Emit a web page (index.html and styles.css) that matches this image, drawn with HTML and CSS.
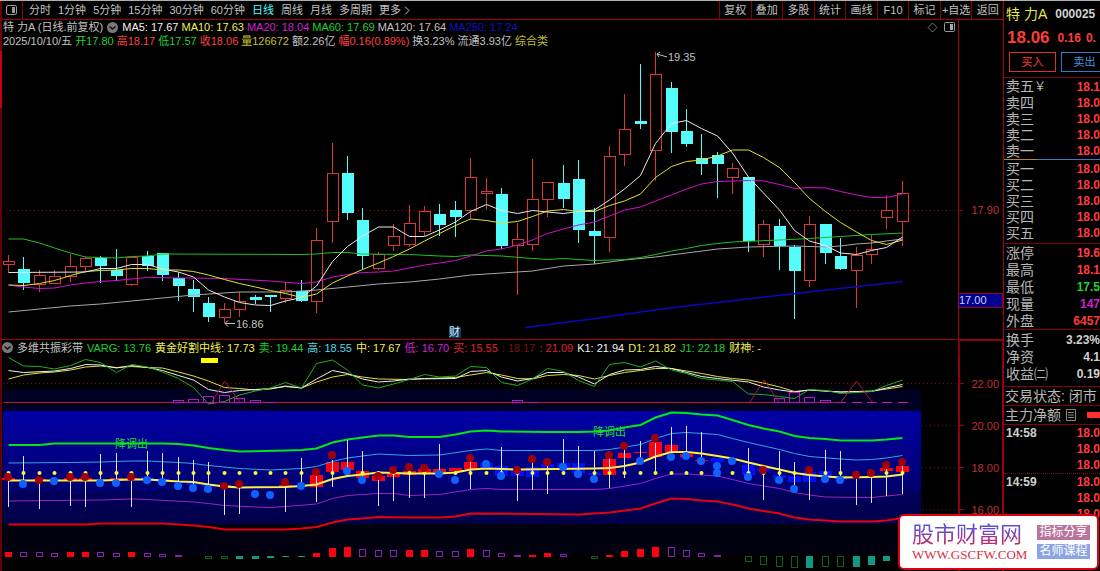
FILE: index.html
```html
<!DOCTYPE html>
<html lang="zh-CN">
    <head>
        <meta charset="utf-8">
        <title>特力A 000025 日线</title>
        <link rel="stylesheet" href="styles.css">
    </head>
    <body>
        <div class="app">
            <div class="workspace">
                <header class="toolbar">
                    <button class="icon-button" aria-label="侧栏">
                        <svg width="12" height="11" viewBox="0 0 12 11">
                            <rect x="0.5" y="0.5" width="10" height="9" rx="1.5" fill="none" stroke="#999"/>
                            <rect x="6" y="2" width="3" height="6" fill="#999"/>
                        </svg>
                    </button>
                    <nav class="periods">
                        <a href="#">分时</a>
                        <a href="#">1分钟</a>
                        <a href="#">5分钟</a>
                        <a href="#">15分钟</a>
                        <a href="#">30分钟</a>
                        <a href="#">60分钟</a>
                        <a href="#" class="active">日线</a>
                        <a href="#">周线</a>
                        <a href="#">月线</a>
                        <a href="#">多周期</a>
                        <a href="#" class="more">更多
                            <svg width="6" height="9" viewBox="0 0 6 9"><path d="M1 0.5L5 4.5L1 8.5" fill="none" stroke="#c0c0c0"/></svg>
                        </a>
                    </nav>
                    <div class="actions">
                        <button>复权</button>
                        <button>叠加</button>
                        <button>多股</button>
                        <button>统计</button>
                        <button>画线</button>
                        <button>F10</button>
                        <button>标记</button>
                        <button>+自选</button>
                        <button>返回</button>
                    </div>
                </header>

                <section class="panel">
                    <div class="panel-head">
                        <div class="legends">
                            <div class="legend">
                                <span class="silver">特 力A (日线.前复权)</span>
                                <svg class="chevron" width="11" height="11" viewBox="0 0 11 11">
                                    <circle cx="5.5" cy="5.5" r="5.5" fill="#777"/>
                                    <path d="M2.5 4.5L5.5 7L8.5 4.5" fill="none" stroke="#111" stroke-width="1.5"/>
                                </svg>
                                <span class="white">MA5: 17.67</span>
                                <span class="yellow">MA10: 17.63</span>
                                <span class="magenta">MA20: 18.04</span>
                                <span class="green">MA60: 17.69</span>
                                <span class="silver">MA120: 17.64</span>
                                <span class="blue">MA250: 17.24</span>
                                <span class="head-tools">
                                    <svg width="11" height="11" viewBox="0 0 11 11"><path d="M5.5 1L10 5.5L5.5 10L1 5.5Z" fill="none" stroke="#777"/></svg>
                                    <svg width="12" height="11" viewBox="0 0 12 11">
                                        <rect x="0.5" y="0.5" width="10" height="9" rx="1" fill="none" stroke="#999"/>
                                        <rect x="6" y="2" width="3" height="6" fill="#aaa"/>
                                    </svg>
                                </span>
                            </div>
                            <div class="legend">
                                <span class="silver">2025/10/10/五</span>
                                <span class="green">开17.80</span>
                                <span class="red">高18.17</span>
                                <span class="green">低17.57</span>
                                <span class="red">收18.06</span>
                                <span class="olive">量126672</span>
                                <span class="silver">额2.26亿</span>
                                <span class="red">幅0.16(0.89%)</span>
                                <span class="silver">换3.23%</span>
                                <span class="silver">流通3.93亿</span>
                                <span class="olive">综合类</span>
                            </div>
                        </div>
                        <div class="axis-head"></div>
                    </div>
                    <svg class="chart" id="kline" viewBox="2 48 1001 291"></svg>
                </section>

                <section class="panel">
                    <div class="panel-head">
                        <div class="legend legend-sub">
                            <svg class="chevron" width="11" height="11" viewBox="0 0 11 11">
                                <circle cx="5.5" cy="5.5" r="5.5" fill="#777"/>
                                <path d="M2.5 4.5L5.5 7L8.5 4.5" fill="none" stroke="#111" stroke-width="1.5"/>
                            </svg>
                            <span class="silver">多维共振彩带</span>
                            <span class="green">VARG: 13.76</span>
                            <span class="yellow">黄金好割中线: 17.73</span>
                            <span class="green">卖: 19.44</span>
                            <span class="cyan">高: 18.55</span>
                            <span class="yellow">中: 17.67</span>
                            <span class="magenta">低: 16.70</span>
                            <span class="crimson">买: 15.55</span>
                            <span class="maroon">: 18.17</span>
                            <span class="crimson">: 21.09</span>
                            <span class="white">K1: 21.94</span>
                            <span class="yellow">D1: 21.82</span>
                            <span class="green">J1: 22.18</span>
                            <span class="yellow">财神: -</span>
                        </div>
                        <div class="axis-head axis-head-sub"></div>
                    </div>
                    <svg class="chart" id="bands" viewBox="2 355 1001 216"></svg>
                </section>
            </div>

            <aside class="quote">
                <h1 class="stock"><span>特 力A</span> <b>000025</b></h1>
                <div class="price"><strong>18.06</strong> <b>0.16</b> <b>0.</b></div>
                <div class="trade">
                    <button class="buy">买入</button>
                    <button class="sell">卖出</button>
                </div>
                <table class="asks">
                    <tr><th>卖五<small>￥</small></th><td>18.1</td></tr>
                    <tr><th>卖四</th><td>18.0</td></tr>
                    <tr><th>卖三</th><td>18.0</td></tr>
                    <tr><th>卖二</th><td>18.0</td></tr>
                    <tr><th>卖一</th><td>18.0</td></tr>
                </table>
                <table class="bids">
                    <tr><th>买一</th><td>18.0</td></tr>
                    <tr><th>买二</th><td>18.0</td></tr>
                    <tr><th>买三</th><td>18.0</td></tr>
                    <tr><th>买四</th><td>18.0</td></tr>
                    <tr><th>买五</th><td>18.0</td></tr>
                </table>
                <table class="stats">
                    <tr><th>涨停</th><td>19.6</td></tr>
                    <tr><th>最高</th><td>18.1</td></tr>
                    <tr><th>最低</th><td class="green">17.5</td></tr>
                    <tr><th>现量</th><td class="magenta">147</td></tr>
                    <tr><th>外盘</th><td>6457</td></tr>
                </table>
                <table class="stats plain">
                    <tr><th>换手</th><td>3.23%</td></tr>
                    <tr><th>净资</th><td>4.1</td></tr>
                    <tr><th>收益㈡</th><td>0.19</td></tr>
                </table>
                <div class="status">交易状态: 闭市</div>
                <div class="status flow">主力净额
                    <svg width="12" height="12" viewBox="0 0 12 12"><path d="M1.5 0.5H10.5V11.5H1.5ZM3 3.5H9M3 6H9M3 8.5H9" fill="none" stroke="#888"/></svg>
                    <i></i>
                </div>
                <table class="ticks">
                    <tr><th>14:58</th><td>18.0</td></tr>
                    <tr><th></th><td>18.0</td></tr>
                    <tr><th></th><td>18.0</td></tr>
                    <tr class="minute"><th>14:59</th><td>18.0</td></tr>
                    <tr><th></th><td>18.0</td></tr>
                    <tr><th></th><td>18.0</td></tr>
                </table>
            </aside>

            <a class="brand" href="#">
                <span class="brand-name">
                    <strong>股市财富网</strong>
                    <em>WWW.GSCFW.COM</em>
                </span>
                <span class="brand-tags">
                    <span>指标分享</span>
                    <span>名师课程</span>
                </span>
            </a>
        </div>
        <script src="script.js"></script>
    </body>
</html>
```
FILE: styles.css
```css
* {
    box-sizing: border-box;
}
body {
    margin: 0;
    background: #000;
    color: #c0c0c0;
    font-family: "Liberation Sans", "Noto Sans CJK SC", sans-serif;
    font-size: 11px;
    line-height: 14px;
    overflow: hidden;
}
button {
    margin: 0;
    padding: 0;
    border: 0;
    background: none;
    color: inherit;
    font: inherit;
}
a {
    color: inherit;
    text-decoration: none;
}
svg {
    display: block;
    flex-shrink: 0;
}

.app {
    position: relative;
    display: grid;
    grid-template-columns: minmax(0, 1fr) 97px;
    min-height: 100vh;
    border-top: 1px solid #b0b0b0;
}
.workspace {
    border-left: 2px solid #700008;
    border-image: linear-gradient(#700008 9%, #c80008 9% 19%, #600008 19%) 2;
    border-width: 0 0 0 2px;
}

/* toolbar */
.toolbar {
    display: flex;
    height: 19px;
    border-bottom: 1px solid #a00010;
}
.icon-button {
    display: flex;
    align-items: center;
    padding: 0 4px;
    width: 21px;
    border-right: 1px solid #800010;
}
.periods {
    display: flex;
    align-items: center;
    gap: 7px;
    flex-grow: 1;
    padding-left: 6px;
    white-space: nowrap;
}
.periods .active {
    color: #54fcfc;
}
.more {
    display: flex;
    align-items: center;
    gap: 3px;
}
.actions {
    display: grid;
    grid-template-columns: repeat(9, 1fr);
    width: 284px;
}
.actions button {
    border-left: 1px solid #800010;
    white-space: nowrap;
}

/* chart panels */
.panel {
    border-bottom: 1px solid #a00010;
}
.panel:last-child {
    border-bottom: 0;
}
.panel-head {
    display: grid;
    grid-template-columns: minmax(0, 1fr) 45px;
}
.axis-head {
    border-left: 1px solid #a00010;
}
.axis-head-sub {
    border: 2px solid #800010;
    border-width: 1px 1px 0 2px;
}
.legend {
    display: flex;
    align-items: center;
    gap: 3px;
    height: 14px;
    padding: 0 2px 0 1px;
    white-space: nowrap;
}
.legend-sub {
    height: 15px;
    gap: 4px;
    padding-left: 0;
}
.chevron {
    margin: 0 1px;
}
.legend-sub .chevron {
    margin: 0;
}
.head-tools {
    display: flex;
    gap: 6px;
    margin-left: auto;
}
.chart {
    width: 100%;
}
.chart text {
    font-size: 11px;
}

.silver { color: #c0c0c0; }
.white { color: #f0f0f0; }
.yellow { color: #f0f050; }
.olive { color: #c0c030; }
.magenta { color: #d020d0; }
.green { color: #20d030; }
.cyan { color: #54d8e8; }
.blue { color: #1010c8; }
.red { color: #ff4040; }
.crimson { color: #e02030; }
.maroon { color: #801018; }

/* quote column */
.quote {
    border-left: 1px solid #a00010;
    overflow: hidden;
    color: #ff3c3c;
    font-size: 12px;
    line-height: 16px;
    white-space: nowrap;
}
.stock {
    display: flex;
    align-items: center;
    gap: 8px;
    margin: 0;
    padding-left: 2px;
    height: 26px;
    color: #e8e840;
    font-size: 14px;
    font-weight: normal;
}
.stock b {
    color: #d0d0d0;
    font-size: 12px;
}
.price {
    display: flex;
    align-items: center;
    gap: 8px;
    height: 22px;
    padding-left: 3px;
}
.price strong {
    font-size: 17px;
}
.price b + b {
    margin-left: -3px;
}
.trade {
    display: flex;
    gap: 5px;
    padding: 3px 0 5px 5px;
    border-bottom: 1px solid #800010;
    font-size: 11px;
    line-height: 14px;
}
.trade button {
    flex: 0 0 47px;
    height: 20px;
    border: 1px solid #d83030;
}
.trade .sell {
    border-color: #3a78c0;
    color: #4a90e0;
}
.quote table {
    width: 100%;
    border-collapse: separate;
    border-spacing: 0;
    border-bottom: 1px solid #800010;
}
.quote th,
.quote td {
    height: 16px;
    padding: 0;
}
.quote th {
    padding-left: 2px;
    color: #b8b8b8;
    font-size: 14px;
    font-weight: normal;
    text-align: left;
}
.quote small {
    font-size: 12px;
}
.quote td {
    max-width: 26px;
    font-weight: bold;
    text-align: right;
}
.quote .asks {
    border-image: linear-gradient(90deg, #b08830 35%, #3a78c8 35%) 1;
    border-width: 0 0 1px;
}
.quote .bids {
    padding: 1px 0 2px;
}
.quote .stats td,
.quote .stats th {
    height: 17px;
}
.quote .plain {
    padding: 1px 0 4px;
}
.plain td {
    color: #d0d0d0;
}
.status {
    height: 19px;
    padding-left: 1px;
    border-bottom: 1px solid #800010;
    color: #b8b8b8;
    font-size: 14px;
    line-height: 18px;
}
.flow {
    display: flex;
    align-items: center;
    gap: 4px;
}
.flow i {
    flex: 0 0 20px;
    margin-left: 6px;
    height: 6px;
    background: #ff3030;
}
.quote .ticks {
    border-bottom: 0;
}
.ticks th {
    color: #d0d0d0;
    font-size: 12px;
    font-weight: bold;
}
.minute th,
.minute td {
    border-top: 1px dotted #801018;
}

/* site badge over the lower right corner */
.brand {
    position: absolute;
    right: 1px;
    bottom: 1px;
    display: flex;
    align-items: center;
    justify-content: space-between;
    width: 201px;
    height: 56px;
    padding: 0 7px 0 12px;
    border: 2px solid #e00010;
    border-radius: 6px;
    background: #fff;
    white-space: nowrap;
}
.brand-name {
    display: flex;
    flex-direction: column;
    gap: 1px;
}
.brand strong {
    background: linear-gradient(#5a50d8 20%, #d82050);
    background-clip: text;
    -webkit-background-clip: text;
    color: transparent;
    font-size: 22px;
    font-weight: normal;
    line-height: 24px;
}
.brand em {
    color: #d83040;
    font-family: "Liberation Serif", serif;
    font-size: 13px;
    font-style: normal;
    line-height: 14px;
}
.brand-tags {
    display: flex;
    flex-direction: column;
    gap: 4px;
    color: #fff;
    font-size: 12px;
    line-height: 15px;
    text-align: center;
}
.brand-tags span {
    width: 53px;
    background: #b8749c;
}
.brand-tags span:last-child {
    background: #8ca4e4;
}
```
FILE: script.js
```js
const NS = "http://www.w3.org/2000/svg";
const STEP = 15.41;
const px = (i) => Math.round(8 + STEP * i) + 0.5;

function add(parent, tag, attrs, text) {
    const el = document.createElementNS(NS, tag);
    for(const key in attrs) {
        el.setAttribute(key, attrs[key]);
    }
    if(text) {
        el.textContent = text;
    }
    parent.appendChild(el);
    return el;
}

// "index,y index,y ..." -> polyline
function curve(parent, data, stroke, width = 1) {
    const points = data.split(" ").map((pair) => {
        const [i, y] = pair.split(",").map(Number);
        return `${px(i)},${y}`;
    }).join(" ");
    add(parent, "polyline", { points, fill: "none", stroke, "stroke-width": width });
}

function line(parent, x1, y1, x2, y2, stroke, more = {}) {
    add(parent, "line", { x1, y1, x2, y2, stroke, "shape-rendering": "crispEdges", ...more });
}

function rect(parent, x, y, width, height, fill, more = {}) {
    add(parent, "rect", { x, y, width, height, fill, "shape-rendering": "crispEdges", ...more });
}

const RED = "#d83838";
const CYAN = "#54fcfc";
const GRID = { "stroke-dasharray": "1 3" };

// type, body top, body bottom, high, low
const candles = [
    ["r", 261, 264, 255, 272], ["c", 269, 283, 257, 290], ["r", 275, 284, 270, 292],
    ["r", 276, 283, 270, 283], ["r", 266, 276, 254, 282], ["r", 258, 266, 257, 271],
    ["c", 258, 266, 256, 283], ["c", 270, 276, 249, 281], ["r", 257, 284, 257, 286],
    ["c", 256, 266, 251, 271], ["c", 253, 275, 253, 281], ["c", 278, 286, 272, 301],
    ["c", 289, 297, 280, 312], ["c", 303, 317, 297, 322], ["r", 309, 317, 303, 323],
    ["r", 301, 309, 292, 317], ["c", 297, 300, 295, 304], ["c", 295, 297, 295, 312],
    ["r", 290, 298, 282, 303], ["c", 291, 301, 280, 302], ["r", 240, 301, 228, 313],
    ["r", 173, 221, 143, 243], ["c", 173, 213, 156, 220], ["c", 220, 256, 208, 269],
    ["r", 254, 268, 252, 270], ["r", 236, 245, 224, 251], ["r", 223, 244, 205, 247],
    ["r", 211, 231, 206, 236], ["c", 214, 225, 204, 236], ["c", 210, 217, 201, 237],
    ["r", 177, 210, 158, 219], ["r", 191, 193, 178, 209], ["c", 194, 246, 188, 249],
    ["r", 239, 245, 223, 295], ["r", 199, 244, 159, 251], ["r", 182, 199, 182, 217],
    ["c", 183, 199, 165, 208], ["c", 179, 230, 160, 243], ["c", 231, 236, 208, 264],
    ["r", 156, 237, 146, 252], ["r", 129, 154, 94, 166], ["c", 121, 124, 64, 129],
    ["r", 74, 150, 52, 181], ["c", 88, 132, 82, 153], ["c", 131, 144, 109, 147],
    ["c", 158, 164, 134, 175], ["c", 155, 164, 152, 198], ["r", 168, 177, 163, 194],
    ["c", 177, 241, 177, 252], ["r", 224, 244, 220, 257], ["c", 226, 246, 219, 270],
    ["c", 247, 271, 245, 319], ["r", 224, 280, 216, 287], ["c", 224, 253, 224, 264],
    ["c", 256, 269, 238, 270], ["r", 255, 270, 247, 308], ["r", 249, 254, 235, 264],
    ["r", 210, 217, 195, 229], ["r", 193, 221, 181, 246],
];

function drawKline() {
    const svg = document.getElementById("kline");

    line(svg, 6, 210.5, 958, 210.5, "#801010", GRID);

    candles.forEach(([type, top, bottom, high, low], i) => {
        const x = px(i);
        const color = type === "r" ? RED : CYAN;
        if(type === "r") {
            line(svg, x, high, x, top, color);
            line(svg, x, bottom, x, low, color);
            rect(svg, x - 5.5, top + 0.5, 11, bottom - top, "none", { stroke: color });
        } else {
            line(svg, x, high, x, low, color);
            rect(svg, x - 5.5, top, 12, bottom - top, color);
        }
    });

    curve(svg, "0,312 4,306 6,304 8,301 10,298 12,295 13,294 15,292 18,292 20,290 22,287 24,284 26,282 28,279 30,275 31,274 34,271 36,266 38,264 40,260 42,257 44,253 46,249 48,247 51,246 53,247 54,246 55,244 56,243 57,241 58,239", "#a8a8a8");
    curve(svg, "0,239 1,239 2,243 3,248 4,253 5,257 6,257.5 7,258 8,256.5 9,256 10,254 19,254.5 20,254 21,252.5 22,252.5 23,254 26,254.5 28,256 29,256.5 30,255 32,256 34,258.5 35,259.5 36,258.5 38,260.5 40,259.5 41,257.5 42,254.5 43,251 44,248.5 45,245.5 46,243.5 47,242 50,240 52,238.5 54,236.5 56,234.5 58,233", "#20c020");
    curve(svg, "0,285 1,287 2,288.5 3,288 4,285 5,283 6,281.5 7,280.5 8,279 9,277.5 14,278.5 17,281 19,283.5 20,282 21,277 22,274.5 23,272.5 24,272 25,271 26,268 27,265 28,263 29,260.5 30,256 31,251 32,249 33,245 34,240 35,233.5 36,229 37,225 38,222 39,216 40,210 41,207 42,201 43,195 44,189 45,184 46,181.5 48,180.5 49,181 50,184.5 51,188.5 52,187.5 53,188 54,191.5 55,195 56,197.5 57,197.5 58,194", "#d010d0");
    curve(svg, "0,285 1,285.5 2,283.5 3,280.5 4,275.5 5,271.5 6,270.5 7,270 8,268.5 9,268.5 10,270 11,270 12,271.5 13,275 14,279.5 15,283.5 16,287 17,290.5 18,293.5 19,297.5 20,294 21,283 22,276 23,269.5 24,263 25,256.5 26,249 27,241 28,233.5 29,225.5 30,219 31,220.5 32,223 33,221.5 34,216.5 35,211 36,209.5 37,211.5 38,211.5 39,205.5 40,201 41,194 42,177.5 43,166.5 44,161.5 45,160 46,156 47,150 48,150 49,157.5 50,167.5 51,182.5 52,198.5 53,211.5 54,222.5 55,232 56,240.5 57,244.5 58,240", "#e0e030");
    curve(svg, "0,272.5 5,272 6,268.5 7,268.5 8,264.5 9,264.5 10,269 11,272 12,277 13,290 14,297 15,302.5 16,305 17,305.5 18,301 19,297.5 20,286 21,261.5 22,246.5 23,236 24,227 25,227 26,236.5 27,236.5 28,230 29,222 30,211.5 31,204.5 32,210.5 33,213.5 34,210.5 35,212 36,213.5 37,211.5 38,210 39,200 40,189 41,175.5 42,143.5 43,123.5 44,120.5 45,128.5 46,136 47,153 48,177 49,193 50,210 51,230.5 52,241 53,245.5 54,253 55,254.5 56,250.5 57,247.5 58,237", "#e8e8e8");
    add(svg, "polyline", {
        points: "525,327.5 592,319 665,308.5 735,300.5 795,293.5 903,281.5",
        fill: "none", stroke: "#0808c0", "stroke-width": 1.5,
    });

    // high and low marks
    add(svg, "path", { d: "M667 57L657 54M660 52L657 54L659 57", fill: "none", stroke: "#c0c0c0" });
    add(svg, "text", { x: 668, y: 61, fill: "#c0c0c0" }, "19.35");
    add(svg, "path", { d: "M235 323.5H225M228 320.5L225 323.5L228 326.5", fill: "none", stroke: "#c0c0c0" });
    add(svg, "text", { x: 236, y: 328, fill: "#c0c0c0" }, "16.86");

    rect(svg, 449, 327, 12, 11, "#103860");
    add(svg, "text", { x: 449, y: 336, fill: "#d8f0ff" }, "财");

    // price axis
    line(svg, 958.5, 48, 958.5, 339, "#a00010");
    line(svg, 958, 210.5, 963, 210.5, "#a00010");
    add(svg, "text", { x: 999, y: 214, fill: "#c03030", "text-anchor": "end" }, "17.90");
    rect(svg, 958.5, 293.5, 44, 14, "#000090", { stroke: "#a00010" });
    add(svg, "text", { x: 959, y: 304, fill: "#d0d0e8" }, "17.00");
}

const sticks = [
    [0, 480, 507], [1, 456, 481], [2, 480, 509], [4, 478, 506], [5, 478, 507], [6, 454, 480],
    [7, 453, 480], [8, 477, 507], [9, 451, 480], [10, 453, 480], [11, 457, 483], [12, 460, 485],
    [13, 462, 487], [14, 487, 515], [15, 486, 514], [18, 485, 512], [19, 458, 485], [20, 475, 502],
    [21, 460, 487], [22, 440, 470], [23, 451, 480], [24, 477, 506], [25, 472, 501], [26, 467, 498],
    [27, 468, 498], [28, 444, 473], [30, 460, 489], [32, 447, 475], [33, 472, 501], [34, 460, 490],
    [35, 463, 494], [36, 439, 467], [37, 446, 473], [38, 451, 478], [39, 458, 488], [40, 448, 478],
    [41, 441, 460], [42, 443, 473], [43, 427, 456], [44, 426, 456], [45, 432, 461], [48, 448, 476],
    [49, 470, 500], [50, 451, 479], [51, 462, 489], [52, 470, 500], [53, 450, 478], [54, 451, 479],
    [55, 476, 505], [56, 473, 503], [57, 467, 496], [58, 465, 494],
];

const balls = [
    "r477", "b484", "r480", "b481", "r477", "r477", "b483", "b483", "r477", "b480",
    "b482", "b486", "b488", "b489", "r486", "r484", "b494", "b495", "r482", "b486",
    "r472", "r455", "b471", "b480", "r476", "r470", "r467", "r468", "b474", "b480",
    "r458", "b464", "b476", "r470", "r459", "r462", "b467", "b474", "b479", "r455",
    "r446", "b461", "r438", "b457", "b456", "b461", "b466", "b461", "b477", "r470",
    "b480", "b489", "r470", "b479", "b480", "r475", "r473", "r465", "r462",
];

const bodies = [
    [0, "r", 478, 480], [2, "r", 479, 481], [4, "r", 478, 480], [5, "r", 478, 480], [7, "r", 478, 480],
    [8, "r", 478, 480], [9, "b", 477, 480], [10, "b", 479, 482], [12, "b", 482, 485], [13, "b", 484, 487],
    [14, "r", 485, 487], [18, "r", 485, 487], [20, "r", 475, 487], [21, "r", 462, 472],
    [22, "r", 462, 470], [23, "r", 471, 478], [24, "r", 476, 481], [25, "r", 474, 477],
    [26, "r", 471, 475], [27, "r", 469, 474], [28, "r", 469, 472], [29, "r", 468, 471],
    [30, "r", 462, 469], [31, "b", 463, 468], [32, "b", 466, 476], [33, "b", 468, 476], [34, "b", 467, 477],
    [35, "b", 464, 468], [36, "b", 463, 468], [37, "b", 463, 473], [38, "b", 473, 475],
    [39, "r", 459, 475], [40, "r", 453, 458], [41, "r", 452, 453], [42, "r", 442, 457],
    [43, "r", 445, 452], [44, "r", 454, 457], [45, "r", 460, 461], [46, "b", 458, 462],
    [48, "b", 465, 475], [49, "b", 468, 471], [50, "b", 475, 478], [51, "b", 476, 482], [52, "b", 472, 482],
    [53, "b", 471, 477], [54, "b", 476, 479], [57, "r", 468, 471], [58, "r", 466, 472],
];

// signal boxes standing on the 402 line: index, top
const boxes = [
    [11, 400], [12, 399], [13, 396], [14, 395], [15, 398], [16, 400], [17, 402],
    [33, 400], [34, 402], [50, 398], [51, 392], [52, 397], [53, 400], [54, 402], [55, 402], [56, 402], [57, 402], [58, 402],
];

// R filled red, P purple outline, G green outline, T filled teal; height from the 556 line
const histogram = [
    "R4", "P4", "P4", "P3", "R4", "R4", "P4", "P3", "R4", "P3",
    "P2", "P1", "G0", "G2", "G2", "T2", "T2", "T1", "T0", "T0",
    "R3", "R8", "R9", "P7", "P6", "P6", "R6", "R6", "P5", "P5",
    "R7", "P6", "P3", "P1", "R1", "R3", "P2", "G0", "G2", "R1",
    "R5", "R7", "R9", "P9", "P6", "P3", "P1", "G0", "G5", "G8",
    "G10", "G11", "T11", "G10", "G10", "T10", "T8", "T4",
];

function drawBands() {
    const svg = document.getElementById("bands");

    // backdrop
    const gradient = add(add(svg, "defs"), "linearGradient", { id: "sea", x1: 0, y1: 0, x2: 0, y2: 1 });
    [[0, "#0000a8"], [0.37, "#000088"], [0.7, "#000070"], [0.72, "#00005c"], [1, "#000048"]].forEach(([offset, color]) => {
        add(gradient, "stop", { offset, "stop-color": color });
    });
    rect(svg, 3, 389, 918, 22, "#000022");
    rect(svg, 3, 411, 918, 113, "url(#sea)");
    rect(svg, 3, 524, 918, 30, "#00000e");

    line(svg, 3, 383.5, 958, 383.5, "#701010", GRID);
    [425.5, 467.5, 509.5].forEach((y) => line(svg, 922, y, 958, y, "#701010", GRID));

    // K1, D1, J1
    curve(svg, "0,379 1,375 2,373 3,372 4,370 5,367 6,366 7,367.5 8,366.5 9,367.5 10,368 11,372 12,376 13,381 14,387.5 15,388.5 16,390 17,389 18,386 19,388 20,382 21,377 22,374.5 23,377 24,379 26,379.5 27,378.5 29,377.5 30,375 31,372.5 32,375 33,378.5 34,379 35,375.5 36,374.5 37,375.5 38,379 39,375.5 40,372.5 41,370.5 42,368.5 43,368.5 44,371 45,373.5 46,376.5 47,378.5 48,380 49,383 50,387 51,391.5 52,390 54,392 55,391.5 56,391 57,389 58,386.5", "#e0e040");
    curve(svg, "0,370.5 1,372.5 3,371 4,368.5 5,364.5 6,365 7,368 8,365.5 9,367.5 10,370.5 11,375.5 12,380 13,389.5 14,392.5 15,390.5 16,389.5 17,388.5 18,386.5 19,388 20,379 21,370.5 22,373.5 23,379 24,382 25,381 26,379 29,378.5 30,371.5 31,370.5 32,377 33,381 34,378.5 35,372.5 36,372.5 37,377 38,384 39,374.5 40,370 41,369.5 42,366.5 43,368.5 44,372.5 45,376.5 46,378.5 48,382 49,387 50,390 51,392 52,390 54,392 56,391.5 57,388 58,384.5", "#f0f0f0");
    curve(svg, "0,357.5 1,366 2,366.5 3,369 4,365.5 5,359.5 6,362.5 7,372.5 8,364.5 9,367 10,372 11,378.5 12,387.5 13,404 14,401.5 15,395 16,391 17,388 18,382.5 19,388 20,363.5 21,360 22,370 23,385 24,388 25,384 26,379.5 27,374.5 28,377 29,376 30,366.5 31,367.5 32,382.5 33,385.5 34,379 35,368.5 36,371.5 37,380.5 38,386.5 39,364.5 40,362.5 41,367 42,361 43,370 44,373.5 45,378.5 47,381.5 48,394 49,394.5 50,396.5 51,398.5 52,389.5 53,390.5 54,393.5 55,392.5 56,391.5 57,385.5 58,380", "#20b020");

    // signals
    line(svg, 3, 402.5, 842, 402.5, "#c01828");
    ["212,402 224.5,381 240,402", "750,402 764,380 779,402", "841,402 856.5,381 872,402"].forEach((points) => {
        add(svg, "polyline", { points, fill: "none", stroke: "#b01820" });
    });
    boxes.forEach(([i, top]) => {
        if(top === 402) {
            line(svg, px(i) - 5, 402.5, px(i) + 5, 402.5, "#d010a0");
        } else {
            rect(svg, px(i) - 5, top + 0.5, 10, 402 - top, "none", { stroke: "#c010c0" });
        }
    });
    rect(svg, 201, 358, 17, 5, "#ffff00");

    // ribbon
    bodies.forEach(([i, type, top, bottom]) => {
        rect(svg, px(i) - 6.5, top, 13, bottom - top, type === "r" ? "#ff0010" : "#0010ff");
    });
    curve(svg, "0,463 4,462.5 6,462 8,461 9,461 11,462.5 12,463.5 13,465.5 15,468.5 17,470 19,468.5 20,466.5 21,461.5 22,458 23,456 24,454 26,455.5 28,455 30,450.5 31,449 32,450.5 38,450.5 39,449.5 41,444.5 42,438.5 43,433.5 44,432.5 46,434.5 47,438.5 48,442.5 50,449.5 51,453.5 52,456.5 54,459 55,460 56,459.5 57,458 58,455.5", "#30a8d8");
    curve(svg, "0,501 6,500 8,499 9,499.5 12,502 13,503.5 14,505.5 16,507 17,507.5 18,506.5 20,504 21,498.5 22,495.5 23,494.5 24,493.5 25,493.5 26,495.5 28,494.5 30,489.5 31,488.5 32,489.5 38,489.5 39,488.5 41,483.5 42,478.5 43,474 44,474 46,476 47,479.5 48,483.5 49,486 50,488.5 51,492.5 52,495 53,497 56,497.5 57,496 58,494.5", "#a020c8");
    curve(svg, "0,445 2,445 3,443.5 10,443.5 11,444 12,445.5 13,448 14,450 15,451.5 18,450.5 19,450 20,448.5 21,442.5 22,439.5 23,437.5 24,435.5 25,435.5 26,437 28,437 29,434.5 30,431.5 31,430.5 32,431.5 35,432 37,432 38,431.5 39,430.5 40,427.5 41,425 42,417.5 43,412.5 44,413 45,414.5 46,415.5 47,420 48,425 49,428.5 50,431.5 51,436 52,438 53,439 54,440.5 56,440.5 57,439.5 58,438", "#00e810", 2);
    curve(svg, "0,524.5 5,524.5 6,523.5 10,523.5 11,524.5 12,525.5 13,527 14,529.5 18,529.5 19,528.5 20,527 21,522.5 22,519.5 23,518.5 24,517 26,517.5 28,517.5 29,516.5 30,513.5 37,514.5 38,513.5 39,512.5 41,508.5 42,503.5 43,498.5 44,499 45,500.5 46,501.5 47,504.5 48,508.5 49,511 50,513.5 51,517.5 52,519.5 53,520.5 54,521.5 56,521.5 57,520.5 58,518", "#e80010", 2);
    curve(svg, "0,480.5 6,480.5 8,479.5 9,479.5 11,481.5 12,482 13,484.5 14,486.5 15,487.5 18,487 19,486 20,484.5 21,479 22,476 23,474.5 24,472.5 26,473.5 28,473.5 29,472.5 30,469.5 31,468.5 33,469.5 38,468.5 39,468 40,466 41,462.5 42,456.5 43,452 44,452 45,453.5 46,456 47,458.5 48,462.5 49,466 50,469.5 51,473 52,475 53,476.5 54,477.5 56,477 57,476.5 58,474.5", "#fff040", 2);
    sticks.forEach(([i, top, bottom]) => {
        line(svg, px(i), top, px(i), bottom, "#e0e0f0");
    });
    balls.forEach((ball, i) => {
        add(svg, "circle", { cx: px(i), cy: 473, r: 2, fill: "#f8f840" });
        add(svg, "circle", { cx: px(i) - 0.5, cy: ball.slice(1), r: 4, fill: ball[0] === "r" ? "#a00008" : "#1060ff" });
    });
    add(svg, "circle", { cx: px(46) - 0.5, cy: 473, r: 4, fill: "#1060ff" });

    add(svg, "text", { x: 115, y: 448, fill: "#20d830" }, "降调出");
    add(svg, "text", { x: 593, y: 436, fill: "#20d830" }, "降调出");

    // histogram
    histogram.forEach((bar, i) => {
        const h = Number(bar.slice(1));
        const down = bar[0] === "G" || bar[0] === "T";
        const y = down ? 556 : 556 - h;
        const color = { R: "#ff0010", P: "#8820b8", G: "#106020", T: "#109888" }[bar[0]];
        if(bar[0] === "P" || bar[0] === "G") {
            rect(svg, px(i) - 3, y + 0.5, 6, h, "none", { stroke: color });
        } else {
            rect(svg, px(i) - 3.5, y, 7, h + 1, color);
        }
    });

    // value axis
    rect(svg, 958, 355, 2, 216, "#900010");
    rect(svg, 1002, 355, 1, 216, "#900010");
    [[383.5, "22.00"], [425.5, "20.00"], [467.5, "18.00"], [509.5, "16.00"]].forEach(([y, label]) => {
        line(svg, 960, y, 964, y, "#a00010");
        add(svg, "text", { x: 999, y: y + 4, fill: "#c03030", "text-anchor": "end" }, label);
    });
}

drawKline();
drawBands();
```
